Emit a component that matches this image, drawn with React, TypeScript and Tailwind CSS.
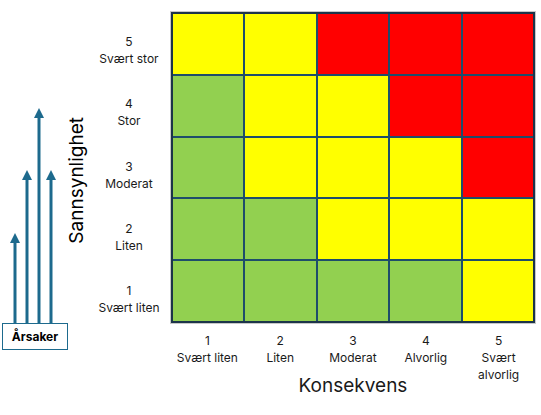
import React from "react";

const Y = "bg-[#ffff00]";
const R = "bg-[#ff0000]";
const G = "bg-[#92d050]";

const matrix = [
  [Y, Y, R, R, R],
  [G, Y, Y, R, R],
  [G, Y, Y, Y, R],
  [G, G, Y, Y, Y],
  [G, G, G, G, Y],
];

const rowLabels = [
  ["5", "Svært stor"],
  ["4", "Stor"],
  ["3", "Moderat"],
  ["2", "Liten"],
  ["1", "Svært liten"],
];

const colLabels = [
  ["1", "Svært liten"],
  ["2", "Liten"],
  ["3", "Moderat"],
  ["4", "Alvorlig"],
];

function Arrows() {
  const c = "#1d6a8d";
  const arrows = [
    { x: 15, tip: 125 },
    { x: 27, tip: 62 },
    { x: 39, tip: 0 },
    { x: 51, tip: 62 },
  ];
  return (
    <svg width="62" height="215" viewBox="0 0 62 215" className="overflow-visible">
      {arrows.map((a, i) => (
        <g key={i}>
          <line x1={a.x} y1={a.tip + 8} x2={a.x} y2={215} stroke={c} strokeWidth={3} />
          <polygon points={`${a.x - 5},${a.tip + 10} ${a.x},${a.tip} ${a.x + 5},${a.tip + 10}`} fill={c} />
        </g>
      ))}
    </svg>
  );
}

export default function App() {
  return (
    <div
      className="w-[541px] h-[415px] bg-white text-black overflow-hidden"
      style={{ fontFamily: "Inter, 'Noto Sans', sans-serif" }}
    >
      <div className="grid grid-cols-[62px_30px_79px_364px] grid-rows-[311px_auto] pt-[12px]">
        {/* arrows */}
        <div className="flex items-end">
          <Arrows />
        </div>
        {/* y axis title */}
        <div className="flex items-center justify-center pt-[26px]">
          <span className="[writing-mode:vertical-rl] rotate-180 text-[19px] leading-[20px] whitespace-nowrap">
            Sannsynlighet
          </span>
        </div>
        {/* row labels */}
        <div className="flex flex-col pr-[5px]">
          {rowLabels.map(([n, t]) => (
            <div key={n} className="flex-1 flex flex-col items-center justify-center pt-[14px] text-[12px] leading-[17px] text-[#1a1a1a]">
              <span>{n}</span>
              <span className="whitespace-nowrap">{t}</span>
            </div>
          ))}
        </div>
        {/* matrix */}
        <div className="grid grid-cols-5 grid-rows-5 gap-[2px] bg-[#1e4d6b] border-2 border-[#1c3449] shadow-[0_0_0_1px_#c8c8c8]">
          {matrix.flat().map((cls, i) => (
            <div key={i} className={cls} />
          ))}
        </div>

        {/* row 2 */}
        <div className="relative">
          <div className="absolute left-[2px] top-0 w-[66px] h-[27px] border border-[#1d6a8d] bg-white flex items-center justify-center text-[12px] font-bold">
            Årsaker
          </div>
        </div>
        <div />
        <div />
        <div className="grid grid-cols-5 grid-rows-[34px_auto] pt-[9px] text-[12px] leading-[17px] text-[#1a1a1a]">
          {colLabels.map(([n, t]) => (
            <div key={n} className="flex flex-col items-center">
              <span>{n}</span>
              <span className="whitespace-nowrap">{t}</span>
            </div>
          ))}
          <div className="row-span-2 flex flex-col items-center">
            <span>5</span>
            <span>Svært</span>
            <span>alvorlig</span>
          </div>
          <div className="col-start-2 col-span-3 row-start-2 mt-[8px] text-center text-[19px] leading-[24px]">
            Konsekvens
          </div>
        </div>
      </div>
    </div>
  );
}
